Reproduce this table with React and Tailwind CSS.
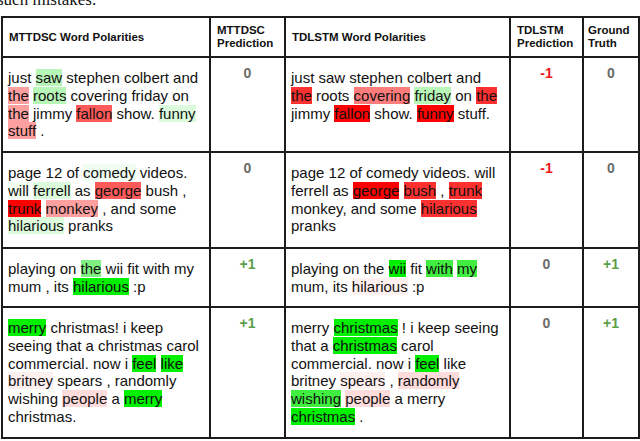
const G1 = "bg-[#00f000]";
const G2 = "bg-[#40ee40]";
const G3 = "bg-[#80f080]";
const G4 = "bg-[#b8f6b8]";
const G5 = "bg-[#dcfbdc]";
const G6 = "bg-[#f0fdf0]";
const R1 = "bg-[#ff0000]";
const R2 = "bg-[#ff3030]";
const R3 = "bg-[#ff5a5a]";
const R4 = "bg-[#ff7c7c]";
const R5 = "bg-[#ffa0a0]";
const R6 = "bg-[#ffdcdc]";
const R7 = "bg-[#fff0f0]";

// each line is a list of [text, bgClass?]
const rows = [
  {
    h: "h-[93px]",
    left: [
      [["just "], ["saw", G4], [" stephen colbert and"]],
      [["the", R5], [" "], ["roots", G4], [" covering friday on"]],
      [["the", R5], [" jimmy "], ["fallon", R3], [" show. "], ["funny", G5]],
      [["stuff", R5], [" ."]],
    ],
    mPred: ["0", "gray"],
    right: [
      [["just saw stephen colbert and"]],
      [["the", R2], [" roots "], ["covering", R4], [" "], ["friday", G4], [" on "], ["the", R2]],
      [["jimmy "], ["fallon", R1], [" show. "], ["funny", R1], [" stuff."]],
    ],
    tPred: ["-1", "red"],
    truth: ["0", "gray"],
  },
  {
    h: "h-[94px]",
    left: [
      [["page 12 of "], ["comedy", G6], [" videos."]],
      [["will", G6], [" "], ["ferrell", G5], [" as "], ["george", R3], [" bush ,"]],
      [["trunk", R1], [" "], ["monkey", R5], [" , and some"]],
      [["hilarious", G5], [" pranks"]],
    ],
    mPred: ["0", "gray"],
    right: [
      [["page 12 of comedy videos. will"]],
      [["ferrell as "], ["george", R1], [" "], ["bush", R2], [" , "], ["trunk", R2]],
      [["monkey, and some "], ["hilarious", R2]],
      [["pranks"]],
    ],
    tPred: ["-1", "red"],
    truth: ["0", "gray"],
  },
  {
    h: "h-[57px]",
    left: [
      [["playing on "], ["the", G3], [" wii fit with my"]],
      [["mum , its "], ["hilarious", G1], [" :p"]],
    ],
    mPred: ["+1", "green"],
    right: [
      [["playing on the "], ["wii", G1], [" fit "], ["with", G2], [" "], ["my", G2]],
      [["mum, its "], ["hilarious", R7], [" :p"]],
    ],
    tPred: ["0", "gray"],
    truth: ["+1", "green"],
  },
  {
    h: "h-[129px]",
    left: [
      [["merry", G1], [" christmas! i keep"]],
      [["seeing that a christmas carol"]],
      [["commercial. now i "], ["feel", G1], [" "], ["like", G1]],
      [["britney", R7], [" spears , randomly"]],
      [["wishing "], ["people", R6], [" a "], ["merry", G1]],
      [["christmas."]],
    ],
    mPred: ["+1", "green"],
    right: [
      [["merry "], ["christmas", G1], [" ! i keep seeing"]],
      [["that a "], ["christmas", G1], [" carol"]],
      [["commercial. now i "], ["feel", G1], [" like"]],
      [["britney "], ["spears", R7], [" , "], ["randomly", R6]],
      [["wishing", G2], [" "], ["people", R6], [" a merry"]],
      [["christmas", G1], [" ."]],
    ],
    tPred: ["0", "gray"],
    truth: ["+1", "green"],
  },
];

const predColor = {
  gray: "text-[#6b6b6b]",
  red: "text-[#f01818]",
  green: "text-[#5c9e48]",
};

const Words = ({ lines }) => (
  <div className="pl-[5px] pt-[11px] text-[15px] leading-[17.8px] text-[#111]">
    {lines.map((line, i) => (
      <div key={i} className="whitespace-pre">
        {line.map(([t, bg], j) => (
          <span key={j} className={bg || ""}>
            {t}
          </span>
        ))}
      </div>
    ))}
  </div>
);

const Pred = ({ value }) => (
  <div className={`pt-[7px] text-center text-[14px] font-bold leading-4 ${predColor[value[1]]}`}>
    {value[0]}
  </div>
);

const Head = ({ children, center }) => (
  <div className="flex items-center bg-white pl-[6px] text-[11.5px] font-bold leading-[13px] text-[#111]">
    <div>{children}</div>
  </div>
);

export default function App() {
  return (
    <div className="h-[441px] w-[640px] overflow-hidden bg-white font-['Liberation_Sans',Arial,sans-serif]">
      <div className="h-4 overflow-hidden">
        <div className="-ml-[3px] -mt-[10px] font-['Liberation_Serif',serif] text-[17px] leading-5 text-[#111]">
          such mistakes.
        </div>
      </div>
      <div className="ml-px grid w-[639px] grid-cols-[206px_73px_223px_71px_54px] gap-[2px] bg-[#1c1c1c] p-[2px]">
        <div className="col-span-5 grid h-[38px] grid-cols-[206px_73px_223px_71px_54px] gap-[2px]">
          <Head>MTTDSC Word Polarities</Head>
          <Head>
            MTTDSC
            <br />
            Prediction
          </Head>
          <Head>TDLSTM Word Polarities</Head>
          <Head>
            TDLSTM
            <br />
            Prediction
          </Head>
          <div className="flex items-center bg-white pl-[4px] text-[11.5px] font-bold leading-[13px] text-[#111]">
            <div>
              Ground
              <br />
              Truth
            </div>
          </div>
        </div>
        {rows.map((r, i) => (
          <div key={i} className={`col-span-5 grid grid-cols-[206px_73px_223px_71px_54px] gap-[2px] ${r.h}`}>
            <div className="bg-white">
              <Words lines={r.left} />
            </div>
            <div className="bg-white">
              <Pred value={r.mPred} />
            </div>
            <div className="bg-white">
              <Words lines={r.right} />
            </div>
            <div className="bg-white">
              <Pred value={r.tPred} />
            </div>
            <div className="bg-white">
              <Pred value={r.truth} />
            </div>
          </div>
        ))}
      </div>
    </div>
  );
}
